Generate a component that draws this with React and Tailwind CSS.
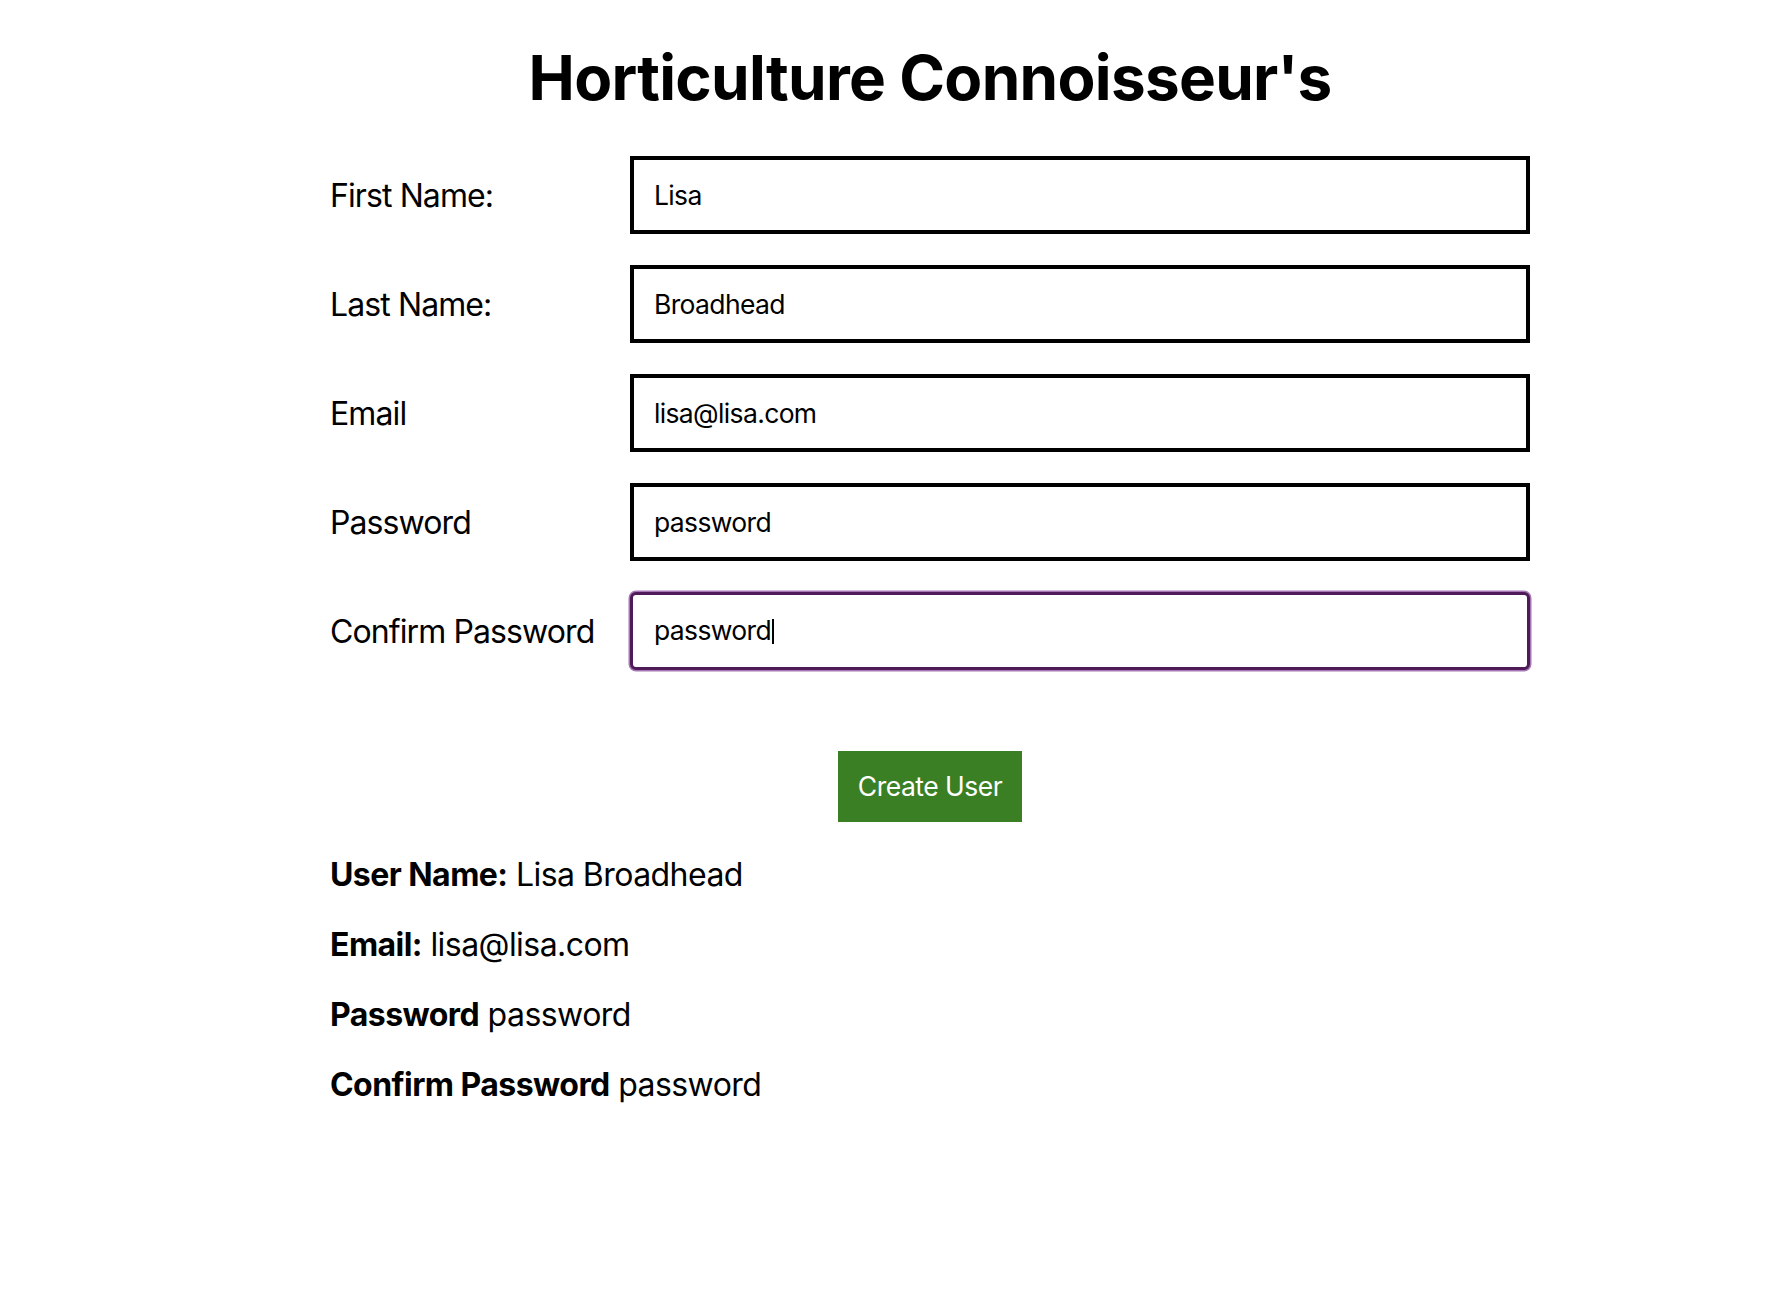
import React from "react";

const fields = [
  { label: "First Name:", value: "Lisa" },
  { label: "Last Name:", value: "Broadhead" },
  { label: "Email", value: "lisa@lisa.com" },
  { label: "Password", value: "password" },
];

export default function App() {
  return (
    <div className="min-h-[1310px] bg-white text-black font-['Inter','Liberation_Sans',sans-serif]">
      <div className="ml-[330px] w-[1200px] pt-[42px]">
        <h1 className="text-center text-[62px] font-bold leading-[71px] tracking-[-0.7px]">
          Horticulture Connoisseur's
        </h1>
        <div className="mt-[43px] flex flex-col gap-[31px]">
          {fields.map((f) => (
            <div key={f.label} className="flex items-center">
              <label className="w-[300px] shrink-0 text-[32px] leading-[37px] tracking-[-0.9px]">{f.label}</label>
              <input
                readOnly
                value={f.value}
                className="w-[900px] h-[78px] border-4 border-black rounded-none pl-[20px] pr-[19px] text-[26.5px] tracking-[-0.65px] outline-none bg-white"
              />
            </div>
          ))}
          <div className="flex items-center">
            <label className="w-[300px] shrink-0 text-[32px] leading-[37px] tracking-[-0.9px]">Confirm Password</label>
            <div className="w-[900px] h-[78px] border-[3px] border-[#4e1b58] rounded-[6px] shadow-[0_0_0_1.5px_#a677b5] pl-[21px] pr-[20px] flex items-center text-[26.5px] tracking-[-0.65px] bg-white">
              <span>password</span>
              <span className="inline-block w-[2px] h-[25px] bg-black ml-[1px]"></span>
            </div>
          </div>
        </div>
        <div className="mt-[81px] flex justify-center">
          <button className="h-[71px] px-[20px] bg-[#3a7f24] text-white text-[26.5px] tracking-[-0.5px]">
            Create User
          </button>
        </div>
        <div className="mt-[34px] flex flex-col gap-[33px] text-[32px] leading-[37px] tracking-[-0.55px]">
          <p><span className="font-bold">User Name:</span> Lisa Broadhead</p>
          <p><span className="font-bold">Email:</span> lisa@lisa.com</p>
          <p><span className="font-bold">Password</span> password</p>
          <p><span className="font-bold">Confirm Password</span> password</p>
        </div>
      </div>
    </div>
  );
}
